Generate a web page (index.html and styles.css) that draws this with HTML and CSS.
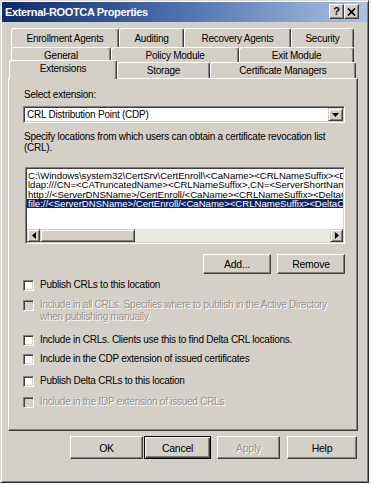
FILE: index.html
```html
<!DOCTYPE html>
<html>
<head>
<meta charset="utf-8">
<link rel="stylesheet" href="styles.css">
</head>
<body>
<div class="window">
  <div class="titlebar">
    <span class="title">External-ROOTCA Properties</span>
    <div class="tbtns">
      <span class="tbtn help">?</span>
      <span class="tbtn close"><svg width="9" height="8" viewBox="0 0 9 8"><path d="M1 0.5 L8 7.5 M8 0.5 L1 7.5" stroke="#000" stroke-width="1.7" fill="none"/></svg></span>
    </div>
  </div>

  <div class="tabs">
    <div class="row r1">
      <div class="tab w-enroll">Enrollment Agents</div>
      <div class="tab w-audit">Auditing</div>
      <div class="tab w-recov">Recovery Agents</div>
      <div class="tab w-sec">Security</div>
    </div>
    <div class="row r2">
      <div class="tab w-gen">General</div>
      <div class="tab w-policy">Policy Module</div>
      <div class="tab w-exit">Exit Module</div>
    </div>
    <div class="row r3">
      <div class="tab active w-ext">Extensions</div>
      <div class="tab w-stor">Storage</div>
      <div class="tab w-cert">Certificate Managers</div>
    </div>
  </div>

  <div class="panel">
    <div class="label">Select extension:</div>
    <div class="combo">
      <span class="combo-text">CRL Distribution Point (CDP)</span>
      <span class="combo-btn"><svg width="7" height="4" viewBox="0 0 7 4"><path d="M0 0 H7 L3.5 4 Z" fill="#000"/></svg></span>
    </div>
    <p class="desc">Specify locations from which users can obtain a certificate revocation list (CRL).</p>

    <div class="listbox">
      <div class="items">
        <div class="item">C:\Windows\system32\CertSrv\CertEnroll\&lt;CaName&gt;&lt;CRLNameSuffix&gt;&lt;DeltaCRLAllowed&gt;.crl</div>
        <div class="item">ldap:///CN=&lt;CATruncatedName&gt;&lt;CRLNameSuffix&gt;,CN=&lt;ServerShortName&gt;,CN=CDP,CN=Public Key Services</div>
        <div class="item">http://&lt;ServerDNSName&gt;/CertEnroll/&lt;CaName&gt;&lt;CRLNameSuffix&gt;&lt;DeltaCRLAllowed&gt;.crl</div>
        <div class="item sel">file://&lt;ServerDNSName&gt;/CertEnroll/&lt;CaName&gt;&lt;CRLNameSuffix&gt;&lt;DeltaCRLAllowed&gt;.crl</div>
      </div>
      <div class="hscroll">
        <span class="sbtn"><svg width="4" height="7" viewBox="0 0 4 7"><path d="M4 0 V7 L0 3.5 Z" fill="#000"/></svg></span>
        <span class="thumb"></span>
        <span class="track"></span>
        <span class="sbtn"><svg width="4" height="7" viewBox="0 0 4 7"><path d="M0 0 V7 L4 3.5 Z" fill="#000"/></svg></span>
      </div>
    </div>

    <div class="listbtns">
      <div class="btn small">Add...</div>
      <div class="btn small">Remove</div>
    </div>

    <div class="checks">
      <div class="chk c1"><span class="box"></span><span>Publish CRLs to this location</span></div>
      <div class="chk c2 dis"><span class="box"></span><span>Include in all CRLs. Specifies where to publish in the Active Directory when publishing manually.</span></div>
      <div class="chk c3"><span class="box"></span><span>Include in CRLs. Clients use this to find Delta CRL locations.</span></div>
      <div class="chk c4"><span class="box"></span><span>Include in the CDP extension of issued certificates</span></div>
      <div class="chk c5"><span class="box"></span><span>Publish Delta CRLs to this location</span></div>
      <div class="chk c6 dis"><span class="box"></span><span>Include in the IDP extension of issued CRLs</span></div>
    </div>
  </div>

  <div class="footer">
    <div class="btn b-ok">OK</div>
    <div class="btn b-cancel default">Cancel</div>
    <div class="btn b-apply dis">Apply</div>
    <div class="btn b-help">Help</div>
  </div>
</div>
</body>
</html>
```

FILE: styles.css
```css
* { box-sizing: border-box; }
html, body { margin: 0; padding: 0; }
body {
  width: 371px;
  height: 484px;
  overflow: hidden;
  background: #f4f4f2;
  font-family: "Liberation Sans", Arial, sans-serif;
  font-size: 10px;
  letter-spacing: -0.25px;
  color: #000;
}

.window {
  width: 369px;
  height: 483px;
  background: #d4d0c8;
  border: 1px solid;
  border-color: #dcd9d2 #303030 #303030 #dcd9d2;
  box-shadow: inset 1px 1px #fff, inset -1px -1px #808080;
  padding: 1px;
}

/* title bar */
.titlebar {
  height: 20px;
  background: linear-gradient(to right, #0e2a6e 0%, #4a6aa8 45%, #a9c2e4 100%);
  display: flex;
  align-items: center;
  justify-content: space-between;
  padding: 0 8px 0 3px;
}
.title {
  color: #fff;
  font-weight: bold;
  font-size: 11px;
  letter-spacing: -0.35px;
}
.tbtns { display: flex; margin-bottom: 1px; }
.tbtn {
  width: 15px;
  height: 15px;
  background: #d4d0c8;
  border: 1px solid;
  border-color: #fff #404040 #404040 #fff;
  box-shadow: inset -1px -1px #808080;
  display: flex;
  align-items: center;
  justify-content: center;
  font-weight: bold;
  font-size: 11px;
  line-height: 1;
  letter-spacing: 0;
}

/* tabs */
.tabs { margin-top: 6px; }
.row { display: flex; }
.r1 { height: 19px; margin-left: 9px; }
.r2 { height: 15px; margin-left: 9px; }
.r3 { height: 16px; margin-left: 7px; align-items: flex-end; }
.tab {
  height: 100%;
  background: #d4d0c8;
  border-top: 1px solid #fff;
  border-left: 1px solid #fff;
  border-right: 1px solid #404040;
  box-shadow: inset -1px 0 #808080;
  border-radius: 3px 3px 0 0;
  display: flex;
  align-items: center;
  justify-content: center;
  white-space: nowrap;
}
.r2 .tab { padding-top: 1px; }
.r3 .tab { padding-bottom: 1px; }
.tab.active {
  height: 19px;
  margin-bottom: -1px;
  position: relative;
  z-index: 1;
  padding-bottom: 4px;
}
.w-enroll { width: 108px; }
.w-audit { width: 65px; }
.w-recov { width: 107px; }
.w-sec { width: 63px; }
.w-gen { width: 100px; }
.w-policy { width: 128px; }
.w-exit { width: 115px; }
.w-ext { width: 108px; }
.w-stor { width: 93px; }
.w-cert { width: 146px; }

/* panel */
.panel {
  margin-left: 6px;
  width: 350px;
  height: 353px;
  border: 1px solid;
  border-color: #fff #404040 #404040 #fff;
  box-shadow: inset -1px -1px #808080;
  padding: 10px 12px 0 14px;
}
.label { line-height: 12px; padding-left: 1px; }

.combo {
  margin-top: 5px;
  height: 17px;
  background: #fff;
  border: 1px solid;
  border-color: #808080 #fff #fff #808080;
  box-shadow: inset 1px 1px #404040, inset -1px -1px #d4d0c8;
  display: flex;
  align-items: center;
  padding: 1px 1px 1px 3px;
}
.combo-text { flex: 1; }
.combo-btn {
  width: 15px;
  height: 13px;
  background: #d4d0c8;
  border: 1px solid;
  border-color: #d4d0c8 #404040 #404040 #d4d0c8;
  box-shadow: inset 1px 1px #fff, inset -1px -1px #808080;
  display: flex;
  align-items: center;
  justify-content: center;
}

.desc {
  margin: 8px 0 0 1px;
  line-height: 11px;
  width: 318px;
}

.listbox {
  margin: 14px 0 0 2px;
  height: 77px;
  background: #fff;
  border: 1px solid;
  border-color: #808080 #fff #fff #808080;
  box-shadow: inset 1px 1px #404040, inset -1px -1px #d4d0c8;
  padding: 2px 1px 1px 1px;
  display: flex;
  flex-direction: column;
}
.items { flex: 1; overflow: hidden; padding-top: 1px; }
.item {
  white-space: nowrap;
  line-height: 9.3px;
  font-size: 9.6px;
  padding-left: 1px;
  letter-spacing: -0.02px;
}
.item.sel { background: #0a246a; color: #fff; }

.hscroll {
  height: 13px;
  display: flex;
}
.sbtn {
  width: 13px;
  height: 13px;
  background: #d4d0c8;
  border: 1px solid;
  border-color: #d4d0c8 #404040 #404040 #d4d0c8;
  box-shadow: inset 1px 1px #fff, inset -1px -1px #808080;
  display: flex;
  align-items: center;
  justify-content: center;
}
.thumb {
  width: 95px;
  height: 13px;
  background: #d4d0c8;
  border: 1px solid;
  border-color: #d4d0c8 #404040 #404040 #d4d0c8;
  box-shadow: inset 1px 1px #fff, inset -1px -1px #808080;
}
.track { flex: 1; background: #ebe9e4; }

.listbtns {
  margin-top: 10px;
  display: flex;
  justify-content: flex-end;
  gap: 6px;
}

.btn {
  height: 23px;
  background: #d4d0c8;
  border: 1px solid;
  border-color: #fff #404040 #404040 #fff;
  box-shadow: inset -1px -1px #808080;
  display: flex;
  align-items: center;
  justify-content: center;
  font-size: 10.5px;
}
.btn.small { width: 68px; height: 20px; }
.btn.default {
  border: 1px solid #000;
  box-shadow: inset 1px 1px #fff, inset -1px -1px #404040, inset -2px -2px #808080;
}
.btn.dis, .chk.dis { color: #96948f; text-shadow: 1px 1px #fff; }

.checks { margin-top: 5px; }
.chk {
  display: flex;
  align-items: flex-start;
  gap: 6px;
  line-height: 12px;
  padding-right: 8px;
}
.box {
  flex: none;
  width: 11px;
  height: 11px;
  margin-top: 1px;
  background: #fff;
  border: 1px solid;
  border-color: #808080 #fff #fff #808080;
  box-shadow: inset 1px 1px #404040, inset -1px -1px #d4d0c8;
}
.chk.dis .box { background: #d4d0c8; }
.c2 { margin-top: 8px; }
.c3 { margin-top: 11px; }
.c4 { margin-top: 7px; }
.c5 { margin-top: 10px; }
.c6 { margin-top: 9px; }

.footer {
  margin-top: 5px;
  display: flex;
  padding-left: 68px;
}
.b-ok { width: 73px; }
.b-cancel { width: 67px; margin-left: 1px; }
.b-apply { width: 63px; margin-left: 6px; }
.b-help { width: 70px; margin-left: 7px; }
```
